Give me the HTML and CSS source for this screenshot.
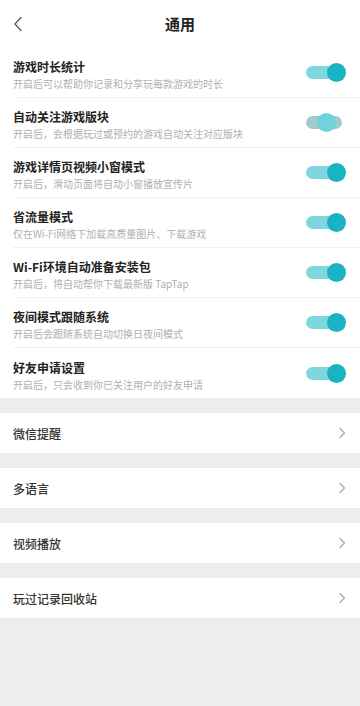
FILE: index.html
```html
<!DOCTYPE html>
<html lang="zh">
<head>
<meta charset="utf-8">
<link rel="stylesheet" href="styles.css">
</head>
<body>
<div class="page">
  <header class="topbar">
    <svg class="back" width="12" height="16" viewBox="0 0 12 16"><path d="M9 1.5 L3 8 L9 14.5" fill="none" stroke="#666" stroke-width="1.6" stroke-linecap="round" stroke-linejoin="round"/></svg>
    <h1 class="title">通用</h1>
  </header>

  <section class="group">
    <div class="row">
      <div class="text"><div class="name">游戏时长统计</div><div class="desc">开启后可以帮助你记录和分享玩每款游戏的时长</div></div>
      <span class="switch on"><span class="knob"></span></span>
    </div>
    <div class="row">
      <div class="text"><div class="name">自动关注游戏版块</div><div class="desc">开启后，会根据玩过或预约的游戏自动关注对应版块</div></div>
      <span class="switch mid"><span class="knob"></span></span>
    </div>
    <div class="row">
      <div class="text"><div class="name">游戏详情页视频小窗模式</div><div class="desc">开启后，滑动页面将自动小窗播放宣传片</div></div>
      <span class="switch on"><span class="knob"></span></span>
    </div>
    <div class="row">
      <div class="text"><div class="name">省流量模式</div><div class="desc">仅在Wi-Fi网络下加载高质量图片、下载游戏</div></div>
      <span class="switch on"><span class="knob"></span></span>
    </div>
    <div class="row">
      <div class="text"><div class="name">Wi-Fi环境自动准备安装包</div><div class="desc">开启后，将自动帮你下载最新版 TapTap</div></div>
      <span class="switch on"><span class="knob"></span></span>
    </div>
    <div class="row">
      <div class="text"><div class="name">夜间模式跟随系统</div><div class="desc">开启后会跟随系统自动切换日夜间模式</div></div>
      <span class="switch on"><span class="knob"></span></span>
    </div>
    <div class="row last">
      <div class="text"><div class="name">好友申请设置</div><div class="desc">开启后，只会收到你已关注用户的好友申请</div></div>
      <span class="switch on"><span class="knob"></span></span>
    </div>
  </section>

  <section class="nav">
    <span class="label">微信提醒</span>
    <svg class="chev" width="8" height="12" viewBox="0 0 8 12"><path d="M2 1.5 L6.5 6 L2 10.5" fill="none" stroke="#aaa" stroke-width="1.3" stroke-linecap="round" stroke-linejoin="round"/></svg>
  </section>
  <section class="nav">
    <span class="label">多语言</span>
    <svg class="chev" width="8" height="12" viewBox="0 0 8 12"><path d="M2 1.5 L6.5 6 L2 10.5" fill="none" stroke="#aaa" stroke-width="1.3" stroke-linecap="round" stroke-linejoin="round"/></svg>
  </section>
  <section class="nav">
    <span class="label">视频播放</span>
    <svg class="chev" width="8" height="12" viewBox="0 0 8 12"><path d="M2 1.5 L6.5 6 L2 10.5" fill="none" stroke="#aaa" stroke-width="1.3" stroke-linecap="round" stroke-linejoin="round"/></svg>
  </section>
  <section class="nav">
    <span class="label">玩过记录回收站</span>
    <svg class="chev" width="8" height="12" viewBox="0 0 8 12"><path d="M2 1.5 L6.5 6 L2 10.5" fill="none" stroke="#aaa" stroke-width="1.3" stroke-linecap="round" stroke-linejoin="round"/></svg>
  </section>
</div>
</body>
</html>
```

FILE: styles.css
```css
html, body {
  margin: 0;
  padding: 0;
  background: #ededed;
}
body {
  font-family: "Noto Sans CJK SC", "Noto Sans", sans-serif;
  width: 360px;
  height: 706px;
  overflow: hidden;
}
.page {
  display: flex;
  flex-direction: column;
}
.topbar {
  height: 48px;
  background: #fff;
  display: flex;
  align-items: center;
  justify-content: center;
  position: relative;
}
.back {
  position: absolute;
  left: 12px;
  top: 16px;
}
.title {
  margin: 0;
  font-size: 15px;
  line-height: 20px;
  font-weight: 700;
  color: #222;
}
.group {
  background: #fff;
  padding-left: 13px;
  margin-bottom: 15px;
}
.row {
  height: 50px;
  display: flex;
  align-items: center;
  justify-content: space-between;
  border-bottom: 1px solid #f0f0f0;
  box-sizing: border-box;
}
.row.last {
  border-bottom: none;
}
.text {
  display: flex;
  flex-direction: column;
  gap: 3px;
  margin-top: 4px;
}
.name {
  font-size: 12px;
  line-height: 15px;
  font-weight: 700;
  color: #222;
}
.desc {
  font-size: 10px;
  line-height: 13px;
  color: #b0b0b0;
}
.switch {
  position: relative;
  width: 36px;
  height: 13px;
  border-radius: 7px;
  background: #80d6df;
  margin-right: 18px;
}
.switch .knob {
  position: absolute;
  top: -3px;
  right: -4px;
  width: 19px;
  height: 19px;
  border-radius: 50%;
  background: #19b3c3;
}
.switch.mid {
  background: #a3c9cd;
}
.switch.mid .knob {
  right: 6px;
  background: #6fd3de;
}
.nav {
  height: 40px;
  background: #fff;
  margin-bottom: 15px;
  display: flex;
  align-items: center;
  justify-content: space-between;
  padding: 0 14px 0 13px;
}
.nav:last-child {
  margin-bottom: 0;
}
.label {
  font-size: 12px;
  color: #333;
  font-weight: 500;
}
```
